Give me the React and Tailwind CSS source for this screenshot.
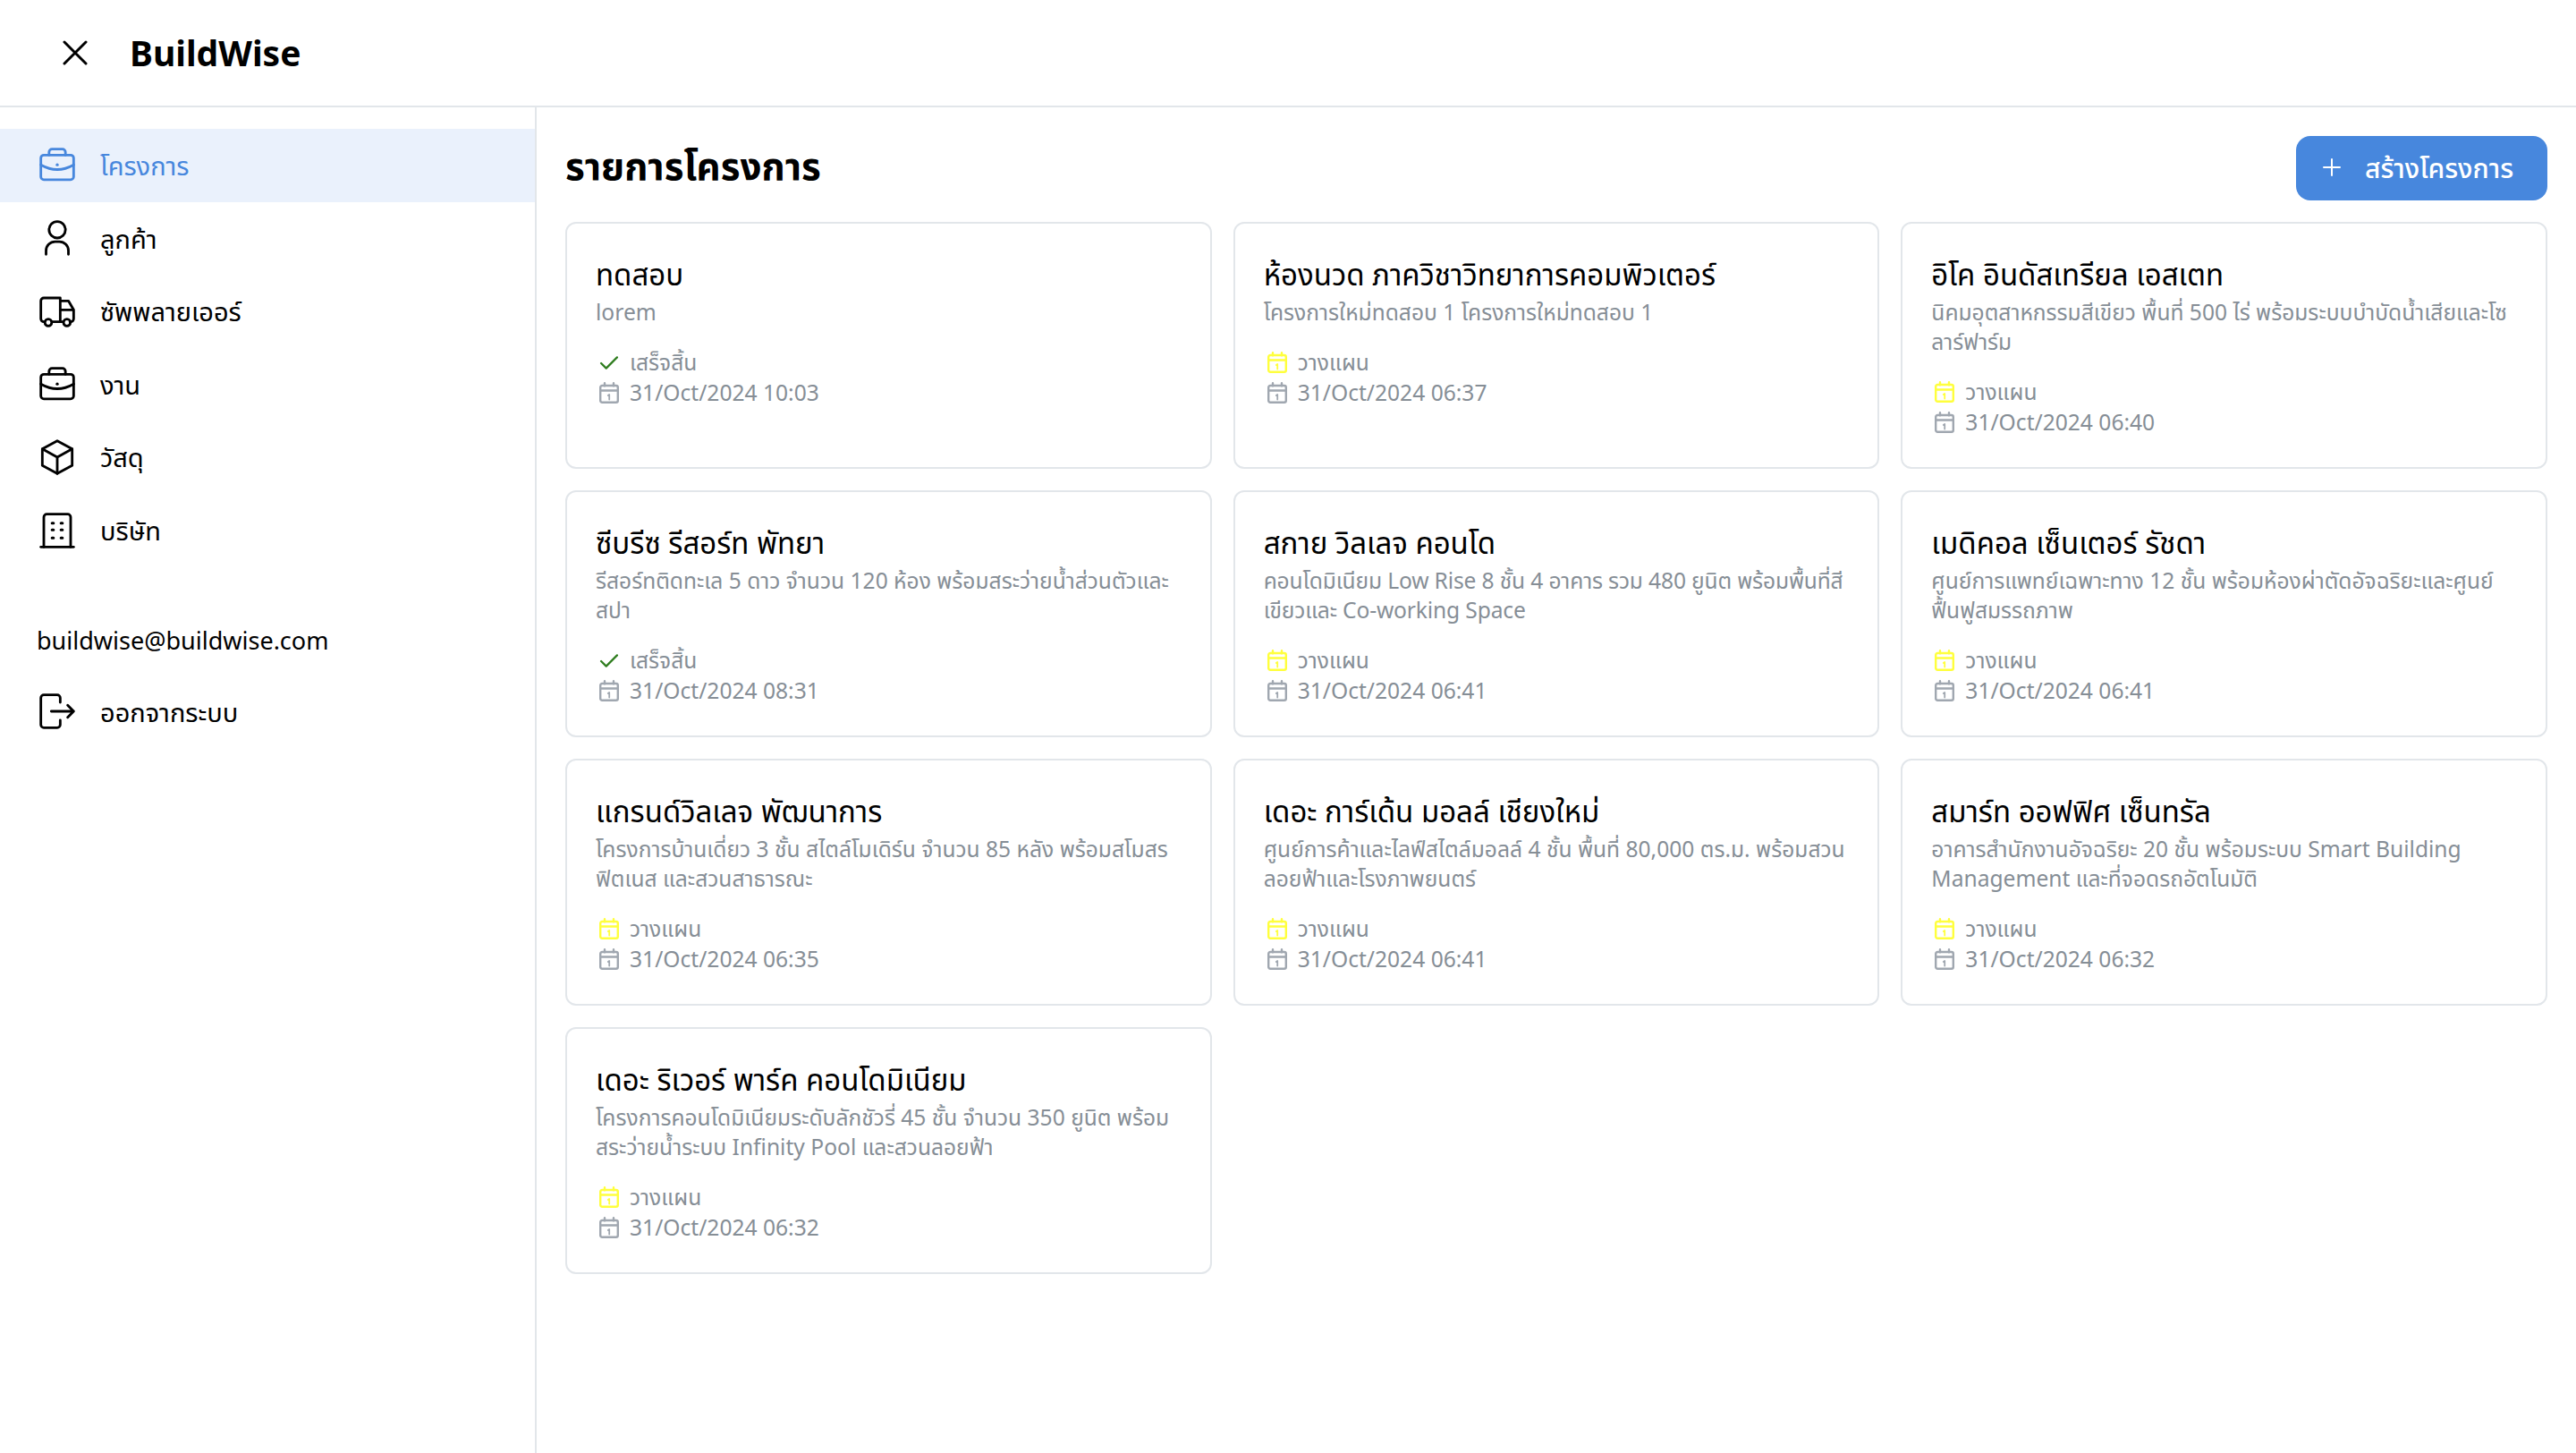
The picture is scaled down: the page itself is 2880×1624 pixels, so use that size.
import React from "react";

const projects = [
  { name: "ทดสอบ", desc: "lorem", status: "done", date: "31/Oct/2024 10:03" },
  { name: "ห้องนวด ภาควิชาวิทยาการคอมพิวเตอร์", desc: "โครงการใหม่ทดสอบ 1 โครงการใหม่ทดสอบ 1", status: "plan", date: "31/Oct/2024 06:37" },
  { name: "อิโค อินดัสเทรียล เอสเตท", desc: "นิคมอุตสาหกรรมสีเขียว พื้นที่ 500 ไร่ พร้อมระบบบำบัดน้ำเสียและโซลาร์ฟาร์ม", status: "plan", date: "31/Oct/2024 06:40" },
  { name: "ซีบรีซ รีสอร์ท พัทยา", desc: "รีสอร์ทติดทะเล 5 ดาว จำนวน 120 ห้อง พร้อมสระว่ายน้ำส่วนตัวและสปา", status: "done", date: "31/Oct/2024 08:31" },
  { name: "สกาย วิลเลจ คอนโด", desc: "คอนโดมิเนียม Low Rise 8 ชั้น 4 อาคาร รวม 480 ยูนิต พร้อมพื้นที่สีเขียวและ Co-working Space", status: "plan", date: "31/Oct/2024 06:41", tight: true },
  { name: "เมดิคอล เซ็นเตอร์ รัชดา", desc: "ศูนย์การแพทย์เฉพาะทาง 12 ชั้น พร้อมห้องผ่าตัดอัจฉริยะและศูนย์ฟื้นฟูสมรรถภาพ", status: "plan", date: "31/Oct/2024 06:41" },
  { name: "แกรนด์วิลเลจ พัฒนาการ", desc: "โครงการบ้านเดี่ยว 3 ชั้น สไตล์โมเดิร์น จำนวน 85 หลัง พร้อมสโมสรฟิตเนส และสวนสาธารณะ", status: "plan", date: "31/Oct/2024 06:35" },
  { name: "เดอะ การ์เด้น มอลล์ เชียงใหม่", desc: "ศูนย์การค้าและไลฟ์สไตล์มอลล์ 4 ชั้น พื้นที่ 80,000 ตร.ม. พร้อมสวนลอยฟ้าและโรงภาพยนตร์", status: "plan", date: "31/Oct/2024 06:41" },
  { name: "สมาร์ท ออฟฟิศ เซ็นทรัล", desc: "อาคารสำนักงานอัจฉริยะ 20 ชั้น พร้อมระบบ Smart Building Management และที่จอดรถอัตโนมัติ", status: "plan", date: "31/Oct/2024 06:32" },
  { name: "เดอะ ริเวอร์ พาร์ค คอนโดมิเนียม", desc: "โครงการคอนโดมิเนียมระดับลักชัวรี่ 45 ชั้น จำนวน 350 ยูนิต พร้อมสระว่ายน้ำระบบ Infinity Pool และสวนลอยฟ้า", status: "plan", date: "31/Oct/2024 06:32" },
];

const Svg = ({ className, children }) => (
  <svg viewBox="0 0 24 24" fill="none" stroke="currentColor" strokeWidth="1.7" strokeLinecap="round" strokeLinejoin="round" className={className}>
    {children}
  </svg>
);

const BriefcaseIcon = ({ className }) => (
  <Svg className={className}>
    <rect x="1" y="5" width="22" height="16.500" rx="2" />
    <path d="M6.500 5V3a2 2 0 0 1 2-2h7a2 2 0 0 1 2 2v2" />
    <path d="M1 11.500c3.500 2 7 3.200 11 3.200s7.500-1.200 11-3.200" />
    <path d="M12 11.500v.01" strokeWidth="2" />
  </Svg>
);

const UserIcon = ({ className }) => (
  <Svg className={className}>
    <circle cx="12" cy="6.500" r="5.500" />
    <path d="M4.500 23v-2.500a6 6 0 0 1 6-6h3a6 6 0 0 1 6 6v2.500" />
  </Svg>
);

const TruckIcon = ({ className }) => (
  <Svg className={className}>
    <path d="M3.500 19H3a2 2 0 0 1-2-2V5a2 2 0 0 1 2-2h11v16H8.500" />
    <path d="M14 5h5.500l3.500 6v6a2 2 0 0 1-2 2h-.500M15.500 19H14M14 11h9" />
    <circle cx="6" cy="19.500" r="2.300" />
    <circle cx="18.500" cy="19.500" r="2.300" />
  </Svg>
);

const BoxIcon = ({ className }) => (
  <Svg className={className}>
    <path d="M12 1 22 6.500v11L12 23 2 17.500v-11z" />
    <path d="M2 6.500 12 12l10-5.500M12 12v11" />
  </Svg>
);

const BuildingIcon = ({ className }) => (
  <Svg className={className}>
    <path d="M1 23h22" />
    <path d="M3 23V3a2 2 0 0 1 2-2h14a2 2 0 0 1 2 2v20" />
    <path d="M8.500 7h1M14.500 7h1M8.500 11.500h1M14.500 11.500h1M8.500 17h1M14.500 17h1" strokeWidth="1.800" />
  </Svg>
);

const LogoutIcon = ({ className }) => (
  <Svg className={className}>
    <path d="M14 6V3a2 2 0 0 0-2-2H3a2 2 0 0 0-2 2v18a2 2 0 0 0 2 2h9a2 2 0 0 0 2-2v-3" />
    <path d="M8 12h15M19 8l4 4-4 4" />
  </Svg>
);

const CalendarIcon = ({ className }) => (
  <svg viewBox="0 0 22 24" fill="none" stroke="currentColor" strokeWidth="2.400" strokeLinecap="round" strokeLinejoin="round" className={className}>
    <rect x="1.200" y="4" width="19.600" height="18.800" rx="2" />
    <path d="M1.200 9.500h19.600M6 1.200v3M16 1.200v3" />
    <path d="M9.800 15l1.400-1v5.500" strokeWidth="1.800" />
  </svg>
);

const CheckIcon = ({ className }) => (
  <svg viewBox="0 0 22 16" fill="none" stroke="currentColor" strokeWidth="2.400" strokeLinecap="round" strokeLinejoin="round" className={className}>
    <path d="M1.500 8.500 7.500 14.500 20.500 1.500" />
  </svg>
);

const navItems = [
  { label: "โครงการ", icon: BriefcaseIcon, active: true },
  { label: "ลูกค้า", icon: UserIcon },
  { label: "ซัพพลายเออร์", icon: TruckIcon },
  { label: "งาน", icon: BriefcaseIcon },
  { label: "วัสดุ", icon: BoxIcon },
  { label: "บริษัท", icon: BuildingIcon },
];

const NavRow = ({ item }) => {
  const Icon = item.icon;
  return (
    <div className={`flex h-[81.6px] items-center gap-[28px] pl-[44px] text-[29px] ${item.active ? "bg-[#eaf1fc] text-[#4787dd]" : "text-black"}`}>
      <Icon className="h-[40px] w-[40px] shrink-0" />
      <span>{item.label}</span>
    </div>
  );
};

const ProjectCard = ({ project }) => (
  <div className="rounded-[12px] border-2 border-[#e2e6ea] bg-white px-[32px] pt-[32px] pb-[33px]">
    <h3 className="text-[33px] leading-[50px] text-black">{project.name}</h3>
    <p className={`text-[24.6px] leading-[33px] text-[#868e96] ${project.tight ? "tracking-[-0.15px]" : ""}`}>{project.desc}</p>
    <div className="mt-[23px] text-[24.6px] leading-[34px] text-[#868e96]">
      <div className="flex items-center gap-[12px] pl-[4px]">
        {project.status === "done" ? (
          <CheckIcon className="h-[15px] w-[22px] shrink-0 text-[#2f7d1f]" />
        ) : (
          <CalendarIcon className="h-[24px] w-[22px] shrink-0 text-[#ffff3d]" />
        )}
        <span>{project.status === "done" ? "เสร็จสิ้น" : "วางแผน"}</span>
      </div>
      <div className="flex items-center gap-[12px] pl-[4px]">
        <CalendarIcon className="h-[24px] w-[22px] shrink-0 text-[#a0a7b0]" />
        <span>{project.date}</span>
      </div>
    </div>
  </div>
);

export default function App() {
  return (
    <div className="flex h-[1624px] w-[2880px] flex-col bg-white font-['Noto_Sans','Noto_Sans_Thai',sans-serif] text-black">
      <header className="flex h-[120px] shrink-0 items-center gap-[47px] border-b-2 border-[#e2e6ea] pl-[70px]">
        <svg viewBox="0 0 28 28" fill="none" stroke="currentColor" strokeWidth="3" strokeLinecap="round" className="h-[28px] w-[28px]">
          <path d="M2 2 26 26M26 2 2 26" />
        </svg>
        <h1 className="text-[39px] font-bold">BuildWise</h1>
      </header>
      <div className="flex min-h-0 flex-1">
        <aside className="w-[600px] shrink-0 border-r-2 border-[#e2e6ea] pt-[24px]">
          {navItems.map((item) => (
            <NavRow key={item.label} item={item} />
          ))}
          <div className="mt-[62px] pl-[41px] text-[27px] leading-[40px]">buildwise@buildwise.com</div>
          <div className="mt-[19px]">
            <NavRow item={{ label: "ออกจากระบบ", icon: LogoutIcon }} />
          </div>
        </aside>
        <main className="flex-1 px-[32px] pt-[32px]">
          <div className="mb-[24px] flex h-[72px] items-center justify-between">
            <h2 className="-mt-[8px] text-[42px] font-bold">รายการโครงการ</h2>
            <button className="flex h-[72px] w-[281px] items-center gap-[27px] rounded-[16px] bg-[#4787dd] pb-[2px] pl-[30px] text-[30px] font-medium text-white">
              <svg viewBox="0 0 20 20" fill="none" stroke="currentColor" strokeWidth="2" strokeLinecap="round" className="h-[20px] w-[20px]">
                <path d="M10 1v18M1 10h18" />
              </svg>
              สร้างโครงการ
            </button>
          </div>
          <div className="grid grid-cols-3 gap-[24px]">
            {projects.map((project) => (
              <ProjectCard key={project.name} project={project} />
            ))}
          </div>
        </main>
      </div>
    </div>
  );
}
